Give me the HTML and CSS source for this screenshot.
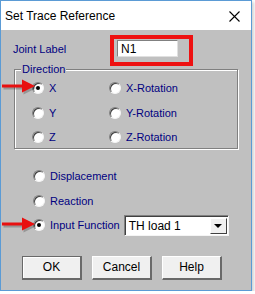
FILE: index.html
```html
<!DOCTYPE html>
<html lang="en">
<head>
    <meta charset="UTF-8">
    <title>Set Trace Reference</title>
    <link rel="stylesheet" href="styles.css">
</head>
<body>
    <div class="window">
        <div class="titlebar">
            <span class="title">Set Trace Reference</span>
            <svg class="close" width="11" height="11" viewBox="0 0 11 11">
                <path d="M0.5 0.5 L10.5 10.5 M10.5 0.5 L0.5 10.5" stroke="#000" stroke-width="1.1" fill="none"/>
            </svg>
        </div>

        <div class="dialog">
            <div class="joint-row">
                <span class="label">Joint Label</span>
                <div class="textbox">N1</div>
            </div>

            <fieldset class="group">
                <legend>Direction</legend>
                <div class="grid">
                    <div class="option"><span class="radio checked"></span>X</div>
                    <div class="option"><span class="radio"></span>X-Rotation</div>
                    <div class="option"><span class="radio"></span>Y</div>
                    <div class="option"><span class="radio"></span>Y-Rotation</div>
                    <div class="option"><span class="radio"></span>Z</div>
                    <div class="option"><span class="radio"></span>Z-Rotation</div>
                </div>
            </fieldset>

            <div class="choices">
                <div class="option"><span class="radio"></span>Displacement</div>
                <div class="option"><span class="radio"></span>Reaction</div>
                <div class="option">
                    <span class="radio checked"></span>Input Function
                    <div class="combo">
                        <span class="combo-text">TH load 1</span>
                        <span class="combo-btn"><span class="tri"></span></span>
                    </div>
                </div>
            </div>

            <div class="buttons">
                <div class="btn default">OK</div>
                <div class="btn">Cancel</div>
                <div class="btn">Help</div>
            </div>
        </div>

        <!-- annotations -->
        <div class="mark"></div>
        <svg class="arrow arrow-x" width="38" height="18" viewBox="0 0 38 18">
            <path d="M0 6.5 L20 6.5 L20 1.5 L33 8 L20 14.5 L20 9.5 L0 9.5 Z" fill="#000" opacity="0.22" transform="translate(1.5 2)"/>
            <path d="M0 6.5 L20 6.5 L20 1.5 L33 8 L20 14.5 L20 9.5 L0 9.5 Z" fill="#e81010"/>
        </svg>
        <svg class="arrow arrow-fn" width="38" height="18" viewBox="0 0 38 18">
            <path d="M0 6.5 L20 6.5 L20 1.5 L33 8 L20 14.5 L20 9.5 L0 9.5 Z" fill="#000" opacity="0.22" transform="translate(1.5 2)"/>
            <path d="M0 6.5 L20 6.5 L20 1.5 L33 8 L20 14.5 L20 9.5 L0 9.5 Z" fill="#e81010"/>
        </svg>
    </div>
</body>
</html>
```

FILE: styles.css
```css
* {
    box-sizing: border-box;
}

body {
    margin: 0;
    background: #ffffff;
    font-family: 'Liberation Sans', Arial, sans-serif;
    font-size: 11px;
}

.window {
    position: relative;
    width: 252px;
    height: 291px;
    border: 1px solid #5b9bd5;
    background: #c0c0c0;
    box-shadow: 2px 2px 3px rgba(0, 0, 0, 0.18);
}

.titlebar {
    height: 29px;
    background: #ffffff;
    display: flex;
    align-items: center;
    justify-content: space-between;
    padding: 0 11px 0 4px;
}

.title {
    font-size: 12px;
    color: #000;
}

.close {
    display: block;
    margin-top: 1px;
}

.dialog {
    padding: 0 0 0 12px;
    color: #000080;
}

.joint-row {
    display: flex;
    align-items: center;
    height: 17px;
    margin-top: 10px;
}

.joint-row .label {
    width: 104px;
}

.textbox {
    width: 61px;
    height: 17px;
    background: #fff;
    color: #000;
    font-size: 12px;
    padding: 1px 0 0 3px;
    border-top: 1px solid #808080;
    border-left: 1px solid #808080;
    border-right: 1px solid #e0e0e0;
    border-bottom: 1px solid #e0e0e0;
}

.group {
    margin: 6px 0 0 1px;
    width: 224px;
    height: 86px;
    padding: 0;
    border: 1px solid #808080;
    box-shadow: inset 1px 1px 0 #ffffff, 1px 1px 0 #ffffff;
}

.group legend {
    margin-left: 6px;
    padding: 0 1px;
    background: #c0c0c0;
    line-height: 12px;
}

.grid {
    display: grid;
    grid-template-columns: 77px 1fr;
    grid-auto-rows: 24.5px;
    margin: 1px 0 0 17px;
}

.option {
    display: flex;
    align-items: center;
    height: 24.5px;
}

.radio {
    width: 12px;
    height: 12px;
    border-radius: 50%;
    background: #fff;
    margin-right: 5px;
    border: 1px solid;
    border-color: #808080 #f4f4f4 #f4f4f4 #808080;
    box-shadow: inset 1px 1px 0 #404040;
    display: flex;
    align-items: center;
    justify-content: center;
}

.radio.checked::after {
    content: "";
    width: 4px;
    height: 4px;
    border-radius: 50%;
    background: #000;
}

.choices {
    margin: 15px 0 0 20px;
}

.choices .option {
    height: 24.5px;
}

.combo {
    display: flex;
    width: 105px;
    height: 21px;
    margin-left: 4px;
    background: #fff;
    border-top: 1px solid #808080;
    border-left: 1px solid #808080;
    border-right: 1px solid #f4f4f4;
    border-bottom: 1px solid #f4f4f4;
    box-shadow: inset 1px 1px 0 #404040;
    color: #000;
    font-size: 12px;
}

.combo-text {
    flex: 1;
    padding: 3px 0 0 4px;
}

.combo-btn {
    width: 17px;
    margin: 2px 1px 1px 0;
    background: #f0f0f0;
    border-top: 1px solid #ffffff;
    border-left: 1px solid #ffffff;
    border-right: 1px solid #404040;
    border-bottom: 1px solid #404040;
    display: flex;
    align-items: center;
    justify-content: center;
}

.tri {
    width: 0;
    height: 0;
    border-left: 4px solid transparent;
    border-right: 4px solid transparent;
    border-top: 4px solid #000;
}

.buttons {
    display: flex;
    gap: 10px;
    margin: 18px 0 0 9px;
}

.btn {
    width: 60px;
    height: 24px;
    background: #f0f0f0;
    color: #000;
    display: flex;
    align-items: center;
    justify-content: center;
    border-top: 1px solid #ffffff;
    border-left: 1px solid #ffffff;
    border-right: 2px solid #696969;
    border-bottom: 2px solid #696969;
    font-size: 12px;
}

.btn.default {
    border: 2px solid #696969;
    border-top-width: 1px;
    border-left-width: 1px;
    box-shadow: inset 1px 1px 0 #ffffff;
}

.mark {
    position: absolute;
    left: 109px;
    top: 34px;
    width: 83px;
    height: 31px;
    border: 4px solid #ee1111;
}

.arrow {
    position: absolute;
    left: 1px;
}

.arrow-x {
    top: 77px;
}

.arrow-fn {
    top: 215px;
}
```
